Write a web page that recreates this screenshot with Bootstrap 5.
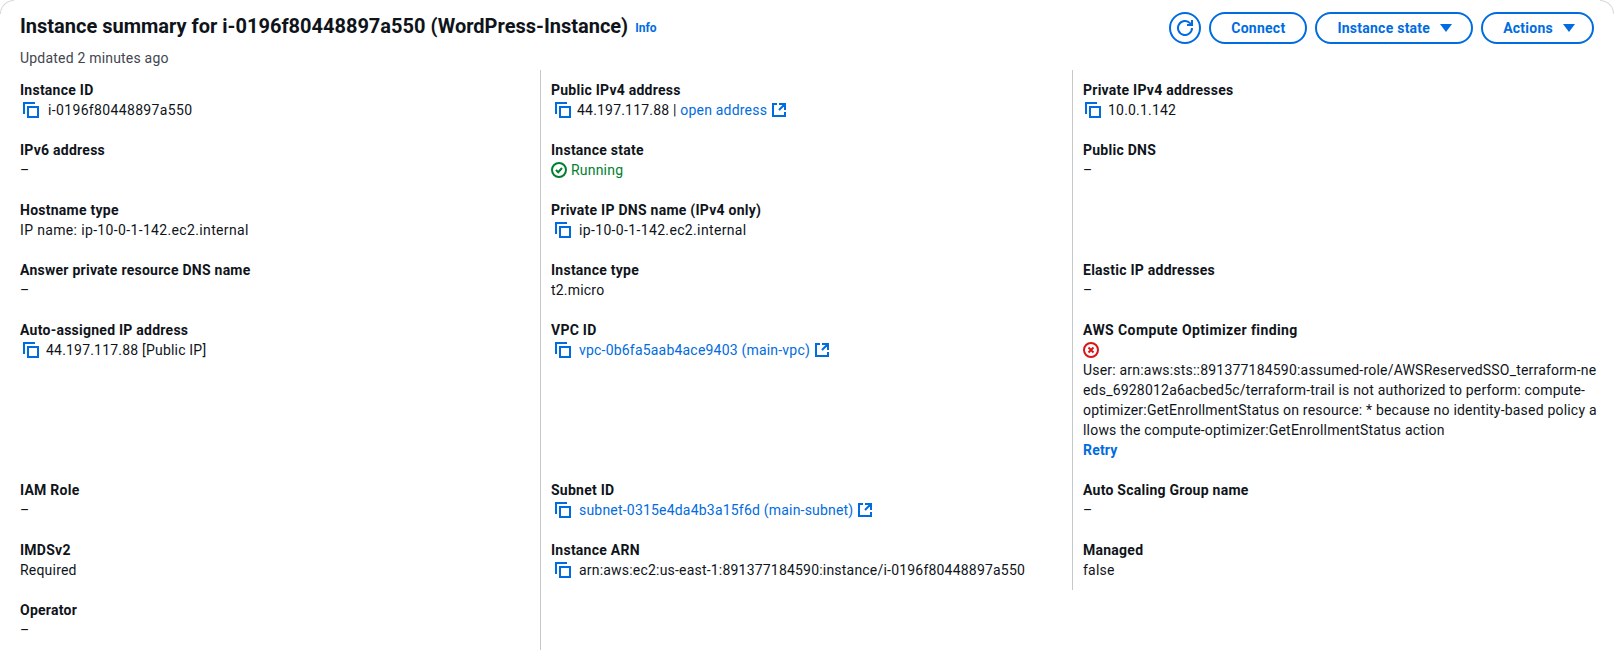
<!DOCTYPE html>
<html><head><meta charset="utf-8">
<link href="https://cdn.jsdelivr.net/npm/bootstrap@5.3.0/dist/css/bootstrap.min.css" rel="stylesheet">
<style>
body{background:#fff;font-family:Roboto,"Noto Sans",sans-serif;font-size:14px;line-height:20px;letter-spacing:.2px;color:#0f141a;overflow:hidden;height:660px}
.panel{position:relative;height:660px;padding:0 20px;overflow:hidden}
.panel::before,.panel::after{content:"";position:absolute;top:0;width:14px;height:14px;border-top:1px solid #d8dade}
.panel::before{left:0;border-left:1px solid #d8dade;border-top-left-radius:14px}
.panel::after{right:0;border-right:1px solid #d8dade;border-top-right-radius:14px}
.headbar{padding-top:12px}
h1.ttl{font-size:20px;line-height:24px;font-weight:700;margin:2px 0 0;letter-spacing:0;font-family:Roboto,sans-serif}
.info{font-size:12px;font-weight:700;color:#006ce0;margin-left:7px;line-height:16px;padding-top:6px;letter-spacing:0}
.upd{color:#424650;line-height:20px;margin-top:10px}
.pill{border:2px solid #006ce0;color:#006ce0;font-weight:700;background:#fff;border-radius:20px;height:32px;font-size:14px;letter-spacing:.25px;padding:0 20px;display:flex;align-items:center;gap:10px;line-height:1}
.round{width:32px;padding:0;justify-content:center}
.state{padding:0 19px 0 20px}
.narrow{padding:0 17px 0 20px}
.tri{width:0;height:0;border-left:6px solid transparent;border-right:6px solid transparent;border-top:8px solid #006ce0}
.cols{display:flex;margin-top:2px}
.c1{width:520px;flex:none}
.c2{width:532px;flex:none;border-left:1px solid #c6c6cd;padding-left:10px;height:580px}
.c3{flex:1;min-width:0;border-left:1px solid #c6c6cd;padding-left:10px;height:520px}
.fld{height:60px;padding-top:10px}
.fld.tall{height:160px}
.lb{font-weight:700;line-height:20px;letter-spacing:.25px}
.lb.lbw{letter-spacing:.4px}
.vl{line-height:20px;min-height:20px;display:flex;align-items:center}
.vl.wide{letter-spacing:.35px}
.ln{color:#006ce0;text-decoration:none}
.cp{margin:0 9px 0 3px;flex:none}
.cp.ip{margin-right:7px}
.c2 .cp{margin:0 8px 0 4px}
.c2 .cp.ip{margin-right:6px}
.c3 .cp{margin-left:2px}
.ext{margin-left:4px;flex:none}
.run{color:#00802f;gap:4px}
.retry{color:#006ce0;font-weight:700}
</style></head><body>
<svg width="0" height="0" class="d-block"><defs>
<symbol id="copy" viewBox="0 0 16 16"><path d="M1 12V1h11M5 5h10v10H5z" fill="none" stroke="#006ce0" stroke-width="2"/></symbol>
<symbol id="ext" viewBox="0 0 16 16"><path d="M14 8V2H8M14 2 8 8M6 2H2v12h12v-4" fill="none" stroke="#006ce0" stroke-width="2"/></symbol>
</defs></svg>
<div class="panel">
<div class="headbar d-flex justify-content-between">
<div><div class="d-flex align-items-center"><h1 class="ttl">Instance summary for i-0196f80448897a550 (WordPress-Instance)</h1><span class="info">Info</span></div>
<div class="upd">Updated 2 minutes ago</div></div>
<div class="d-flex gap-2">
<button class="pill round"><svg width="16" height="16" viewBox="0 0 16 16" fill="none" stroke="#006ce0" stroke-width="2"><path d="M15 8a7 7 0 1 1-2-4.9L15 5"/><path d="M15 0v5h-5"/></svg></button>
<button class="pill">Connect</button>
<button class="pill state">Instance state <span class="tri"></span></button>
<button class="pill narrow">Actions <span class="tri"></span></button>
</div></div>
<div class="cols">
<div class="c1">
<div class="fld"><div class="lb">Instance ID</div><div class="vl wide"><svg class="cp" width="16" height="16"><use href="#copy"/></svg>i-0196f80448897a550</div></div>
<div class="fld"><div class="lb">IPv6 address</div><div class="vl">–</div></div>
<div class="fld"><div class="lb">Hostname type</div><div class="vl wide">IP name: ip-10-0-1-142.ec2.internal</div></div>
<div class="fld"><div class="lb">Answer private resource DNS name</div><div class="vl">–</div></div>
<div class="fld tall"><div class="lb">Auto-assigned IP address</div><div class="vl"><svg class="cp ip" width="16" height="16"><use href="#copy"/></svg>44.197.117.88 [Public IP]</div></div>
<div class="fld"><div class="lb">IAM Role</div><div class="vl">–</div></div>
<div class="fld"><div class="lb">IMDSv2</div><div class="vl">Required</div></div>
<div class="fld"><div class="lb">Operator</div><div class="vl">–</div></div>
</div>
<div class="c2">
<div class="fld"><div class="lb">Public IPv4 address</div><div class="vl"><svg class="cp ip" width="16" height="16"><use href="#copy"/></svg>44.197.117.88&nbsp;|&nbsp;<a class="ln" href="#">open address</a><svg class="ext" width="16" height="16"><use href="#ext"/></svg></div></div>
<div class="fld"><div class="lb">Instance state</div><div class="vl run"><svg width="16" height="16" viewBox="0 0 16 16" fill="none" stroke="#00802f" stroke-width="2"><circle cx="8" cy="8" r="7"/><path d="m5 8 2.2 2.2L11 6"/></svg>Running</div></div>
<div class="fld"><div class="lb">Private IP DNS name (IPv4 only)</div><div class="vl wide"><svg class="cp" width="16" height="16"><use href="#copy"/></svg>ip-10-0-1-142.ec2.internal</div></div>
<div class="fld"><div class="lb">Instance type</div><div class="vl">t2.micro</div></div>
<div class="fld tall"><div class="lb">VPC ID</div><div class="vl"><svg class="cp" width="16" height="16"><use href="#copy"/></svg><a class="ln" href="#">vpc-0b6fa5aab4ace9403 (main-vpc)</a><svg class="ext" width="16" height="16"><use href="#ext"/></svg></div></div>
<div class="fld"><div class="lb">Subnet ID</div><div class="vl"><svg class="cp" width="16" height="16"><use href="#copy"/></svg><a class="ln" href="#">subnet-0315e4da4b3a15f6d (main-subnet)</a><svg class="ext" width="16" height="16"><use href="#ext"/></svg></div></div>
<div class="fld"><div class="lb">Instance ARN</div><div class="vl"><svg class="cp" width="16" height="16"><use href="#copy"/></svg>arn:aws:ec2:us-east-1:891377184590:instance/i-0196f80448897a550</div></div>
</div>
<div class="c3">
<div class="fld"><div class="lb">Private IPv4 addresses</div><div class="vl"><svg class="cp ip" width="16" height="16"><use href="#copy"/></svg>10.0.1.142</div></div>
<div class="fld"><div class="lb">Public DNS</div><div class="vl">–</div></div>
<div class="fld"></div>
<div class="fld"><div class="lb">Elastic IP addresses</div><div class="vl">–</div></div>
<div class="fld tall"><div class="lb lbw">AWS Compute Optimizer finding</div><div class="vl"><svg width="16" height="16" viewBox="0 0 16 16" fill="none" stroke="#d91515" stroke-width="2"><circle cx="8" cy="8" r="7"/><path d="m5.5 5.5 5 5M10.5 5.5l-5 5"/></svg></div>
<div class="text-nowrap">User: arn:aws:sts::891377184590:assumed-role/AWSReservedSSO_terraform-ne<br>eds_6928012a6acbed5c/terraform-trail is not authorized to perform: compute-<br>optimizer:GetEnrollmentStatus on resource: * because no identity-based policy a<br>llows the compute-optimizer:GetEnrollmentStatus action</div>
<a class="ln retry d-block" href="#">Retry</a></div>
<div class="fld"><div class="lb">Auto Scaling Group name</div><div class="vl">–</div></div>
<div class="fld"><div class="lb">Managed</div><div class="vl">false</div></div>
</div>
</div></div>
</body></html>
